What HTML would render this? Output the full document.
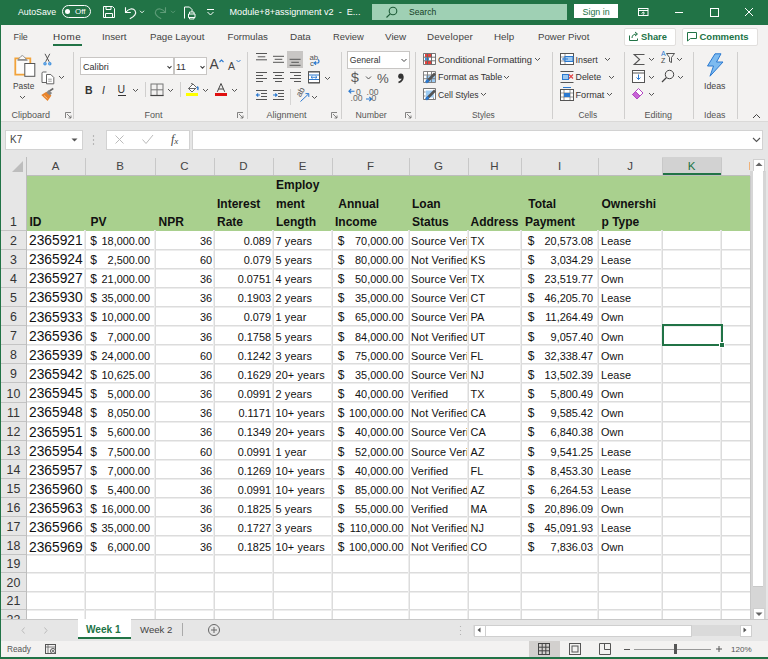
<!DOCTYPE html>
<html><head><meta charset="utf-8">
<style>
*{margin:0;padding:0;box-sizing:content-box}
html,body{width:768px;height:659px;overflow:hidden;background:#F3F2F1;font-family:"Liberation Sans",sans-serif;position:relative}
.abs{position:absolute}
.hl{position:absolute;left:27px;width:723px;height:1px;background:#DCDCDC;box-shadow:0 1px 0 #EDEDED}
.vl{position:absolute;top:230px;height:389px;width:1px;background:#DCDCDC;box-shadow:-1px 0 0 #EDEDED}
.colh{top:157px;height:18px;line-height:18px;text-align:center;font-size:11.5px}
.rowh{left:1px;width:25px;text-align:center;font-size:12.4px;color:#333;line-height:14px}
.h{font-weight:bold;font-size:12px;color:#111;line-height:14px;white-space:nowrap}
.d{font-size:10.9px;color:#111;line-height:14px;white-space:nowrap}
.big{font-size:13.8px;color:#111;line-height:14px;white-space:nowrap}
.clip{overflow:hidden}
.t{letter-spacing:0.12px}
.dl{font-size:12px}
.tab{position:absolute;top:31px;font-size:9.7px;color:#444;line-height:12px;white-space:nowrap}
.ui{position:absolute;font-size:9.5px;color:#333;line-height:12px;white-space:nowrap}
.lbl{position:absolute;top:109px;font-size:9px;color:#555;line-height:12px;white-space:nowrap}
.sep{position:absolute;top:52px;width:1px;height:67px;background:#D0CFCE}
</style></head><body>
<!-- window borders -->
<div class="abs" style="left:0;top:0;width:768px;height:25px;background:#217346"></div>
<div class="abs" style="left:0;top:0;width:1px;height:659px;background:#217346"></div>
<div class="abs" style="left:0;top:657px;width:768px;height:2px;background:#217346"></div>

<!-- title bar -->
<div class="ui" style="left:18px;top:6px;font-size:8.8px;color:#fff">AutoSave</div>
<div class="abs" style="left:62px;top:5px;width:27px;height:11px;border:1px solid #fff;border-radius:7px"></div>
<div class="abs" style="left:65px;top:9px;width:5px;height:5px;background:#fff;border-radius:50%"></div>
<div class="ui" style="left:75px;top:6px;font-size:8px;color:#fff">Off</div>
<!-- save icon -->
<svg class="abs" style="left:102px;top:5px" width="14" height="14" viewBox="0 0 14 14"><path d="M1.5 1.5h9l2 2v9h-11z" fill="none" stroke="#fff" stroke-width="1"/><path d="M4 1.5v3h5v-3M3.5 12.5v-4h7v4" fill="none" stroke="#fff" stroke-width="1"/></svg>
<!-- undo -->
<svg class="abs" style="left:95px;top:0" width="130" height="25" viewBox="95 0 130 25">
 <path d="M125.5 7.2v5.3h5.3" fill="none" stroke="#fff" stroke-width="1.1"/>
 <path d="M125.8 12.2C128.5 8.5 133 7.8 135 10.5C137 13.5 134.5 16.5 129.8 18.8" fill="none" stroke="#fff" stroke-width="1.1"/>
 <path d="M140 10.8l2 2 2-2" fill="none" stroke="#fff" stroke-width="0.9"/>
 <path d="M165.5 7.2v5.3h-5.3" fill="none" stroke="#5E9C78" stroke-width="1.1"/>
 <path d="M165.2 12.2C162.5 8.5 158 7.8 156 10.5C154 13.5 156.5 16.5 161.2 18.8" fill="none" stroke="#5E9C78" stroke-width="1.1"/>
 <path d="M171 10.8l2 2 2-2" fill="none" stroke="#5E9C78" stroke-width="0.9"/>
 <path d="M184.5 18.5v-11.5h5l2.5 2.5v2.5" fill="none" stroke="#fff" stroke-width="1"/>
 <path d="M188.5 14h6.5v3.5h-6.5z" fill="none" stroke="#fff" stroke-width="1"/>
 <path d="M189.5 14v-2h4.5v2M189.5 17.5v1.5h4.5v-1.5" fill="none" stroke="#fff" stroke-width="0.9"/>
</svg>
<!-- customize -->
<svg class="abs" style="left:206px;top:8px" width="9" height="9" viewBox="0 0 9 9"><path d="M1 1.5h7M1.5 4l3 3 3-3" fill="none" stroke="#fff" stroke-width="1"/></svg>
<div class="ui" style="left:229.5px;top:5.5px;font-size:9.1px;color:#fff">Module+8+assignment v2&nbsp; - &nbsp;E...</div>
<!-- search -->
<div class="abs" style="left:372px;top:4px;width:195px;height:16px;background:#9FD0B4"></div>
<svg class="abs" style="left:385px;top:5px" width="14" height="14" viewBox="0 0 14 14"><circle cx="8" cy="6" r="3.8" fill="none" stroke="#1E5C38" stroke-width="1.1"/><path d="M5.2 8.8L1.5 12.5" stroke="#1E5C38" stroke-width="1.2"/></svg>
<div class="ui" style="left:409px;top:6px;font-size:8.6px;color:#133F25">Search</div>
<!-- sign in -->
<div class="abs" style="left:574px;top:4px;width:44px;height:14px;background:#fff"></div>
<div class="ui" style="left:582.5px;top:5.5px;font-size:8.9px;color:#217346">Sign in</div>
<!-- window controls -->
<svg class="abs" style="left:637px;top:7px" width="12" height="10" viewBox="0 0 12 10"><rect x="1.5" y="1.5" width="9.5" height="7" fill="none" stroke="#fff"/><path d="M1.5 3.5h9.5" stroke="#fff"/><path d="M4.5 6.5l1.75-1.5 1.75 1.5M6.25 5v3" fill="none" stroke="#fff" stroke-width="0.8"/></svg>
<div class="abs" style="left:674.5px;top:11.5px;width:8px;height:1px;background:#fff"></div>
<div class="abs" style="left:709.5px;top:7.5px;width:7.5px;height:7.5px;border:1px solid #fff"></div>
<svg class="abs" style="left:744px;top:6.5px" width="10" height="10" viewBox="0 0 10 10"><path d="M1 1L9 9M9 1L1 9" stroke="#fff" stroke-width="1"/></svg>

<!-- ribbon tabs -->
<div class="tab" style="left:13.5px;font-size:8.9px">File</div>
<div class="tab" style="left:53px;color:#333;font-size:9.9px;letter-spacing:0.45px">Home</div>
<div class="abs" style="left:53px;top:44px;width:29px;height:2px;background:#217346"></div>
<div class="tab" style="left:102px;font-size:9.8px">Insert</div>
<div class="tab" style="left:150px">Page Layout</div>
<div class="tab" style="left:227.5px">Formulas</div>
<div class="tab" style="left:290px;font-size:9.9px">Data</div>
<div class="tab" style="left:333px;font-size:9.4px">Review</div>
<div class="tab" style="left:385px;font-size:9.9px">View</div>
<div class="tab" style="left:427px;font-size:9.8px;letter-spacing:0.15px">Developer</div>
<div class="tab" style="left:494px;font-size:9.8px">Help</div>
<div class="tab" style="left:538px;font-size:9.65px">Power Pivot</div>
<div class="abs" style="left:623.5px;top:28px;width:50px;height:16px;background:#fff;border:1px solid #E1DFDD;border-radius:2px"></div>
<svg class="abs" style="left:628px;top:31px" width="12" height="11" viewBox="0 0 12 11"><path d="M1.5 4.5v5h8v-2" fill="none" stroke="#217346"/><path d="M4 7c0-3 2-4 5-4M7 1l2.5 2L7 5" fill="none" stroke="#217346"/></svg>
<div class="tab" style="left:641px;top:31px;color:#217346;font-size:9.3px;font-weight:bold">Share</div>
<div class="abs" style="left:681.5px;top:28px;width:74px;height:16px;background:#fff;border:1px solid #E1DFDD;border-radius:2px"></div>
<svg class="abs" style="left:686px;top:31px" width="12" height="11" viewBox="0 0 12 11"><path d="M1.5 1.5h9v6h-6l-3 2.5z" fill="none" stroke="#217346"/></svg>
<div class="tab" style="left:699.5px;top:31px;color:#217346;font-size:9.5px;font-weight:bold">Comments</div>

<!-- ===== ribbon body ===== -->
<!-- Clipboard -->
<svg class="abs" style="left:0;top:45px" width="75" height="60" viewBox="0 45 75 60">
 <path d="M15.3 58.3h15v16.4h-15z" fill="#FAFAFA" stroke="#F2A33A" stroke-width="1.8"/>
 <path d="M17.5 60.2h10" stroke="#999" stroke-width="1.4"/>
 <path d="M18 59.5l3-3.2q1.3-1.5 2.6 0l3 3.2z" fill="#FAFAFA" stroke="#888" stroke-width="0.9"/>
 <rect x="24.8" y="63.5" width="10" height="12.8" fill="#fff" stroke="#555" stroke-width="1"/>
 <path d="M45 53.8l4.2 8M49.8 53.8l-4.2 8" stroke="#444" stroke-width="0.9"/>
 <circle cx="45" cy="63.8" r="1.7" fill="#3B8EDC"/><circle cx="49.8" cy="63.8" r="1.7" fill="#3B8EDC"/>
 <circle cx="45" cy="63.8" r="0.6" fill="#BFDDF7"/><circle cx="49.8" cy="63.8" r="0.6" fill="#BFDDF7"/>
 <path d="M46.5 82.5h-4.5v-9.3q0-1.2 1.2-1.2h3.3" fill="#fff" stroke="#555" stroke-width="0.9"/>
 <path d="M46.5 74.5h4.3l3 3v6.3h-7.3z" fill="#fff" stroke="#555" stroke-width="0.9"/>
 <path d="M48.2 79.2h3.6M48.2 81.2h3.6" stroke="#777" stroke-width="0.7"/>
 <path d="M41.3 95l6.3 5.9 3.8-5.4-5-3.8z" fill="#E8832A"/>
 <path d="M44 95.5l3.5 3" stroke="#F5C08A" stroke-width="1"/>
 <path d="M46.3 92.5l2.2-2.4 3.6 3-2.2 2.4z" fill="#888"/>
 <path d="M49.5 91l3.8-2.5" stroke="#666" stroke-width="1.5"/>
</svg>
<div class="ui" style="left:12.8px;top:79.5px;font-size:9.7px;color:#444;transform:scaleX(0.86);transform-origin:0 0">Paste</div>
<svg class="abs" style="left:19px;top:95px" width="7" height="5" viewBox="0 0 7 5"><path d="M1 1l2.5 2.5L6 1" fill="none" stroke="#555"/></svg>
<svg class="abs" style="left:58px;top:75px" width="7" height="5" viewBox="0 0 7 5"><path d="M1 1l2.5 2.5L6 1" fill="none" stroke="#555"/></svg>
<div class="lbl" style="left:11.5px">Clipboard</div>
<svg class="abs" style="left:65px;top:112px" width="7" height="7" viewBox="0 0 7 7"><path d="M0.5 6V0.5H6M2 2l4 4M6 3.5V6H3.5" fill="none" stroke="#666" stroke-width="0.8"/></svg>
<div class="sep" style="left:73px"></div>

<!-- Font -->
<div class="abs" style="left:80px;top:57px;width:92px;height:16px;background:#fff;border:1px solid #C8C6C4"></div>
<div class="ui" style="left:83px;top:60.5px;font-size:9.1px;color:#333">Calibri</div>
<svg class="abs" style="left:166px;top:64.5px" width="7" height="5" viewBox="0 0 7 5"><path d="M1.5 1.2l2 2 2-2" fill="none" stroke="#444" stroke-width="1.1"/></svg>
<div class="abs" style="left:174px;top:57px;width:31px;height:16px;background:#fff;border:1px solid #C8C6C4"></div>
<div class="ui" style="left:176px;top:60.5px;font-size:9.5px;color:#333">11</div>
<svg class="abs" style="left:198.5px;top:64.5px" width="7" height="5" viewBox="0 0 7 5"><path d="M1.5 1.2l2 2 2-2" fill="none" stroke="#444" stroke-width="1.1"/></svg>
<div class="ui" style="left:209.5px;top:58.5px;font-size:13.8px;color:#444">A</div>
<svg class="abs" style="left:218.5px;top:59px" width="5" height="4" viewBox="0 0 5 4"><path d="M0.5 3L2.5 1 4.5 3" fill="none" stroke="#2B79D0" stroke-width="1.1"/></svg>
<div class="ui" style="left:228px;top:60px;font-size:10.5px;color:#444">A</div>
<svg class="abs" style="left:236px;top:59px" width="5" height="4" viewBox="0 0 5 4"><path d="M0.5 1L2.5 3 4.5 1" fill="none" stroke="#2B79D0" stroke-width="0.9"/></svg>
<div class="ui" style="left:85px;top:83.5px;font-size:10.5px;font-weight:bold;color:#333">B</div>
<div class="ui" style="left:102px;top:83.5px;font-size:10.5px;font-style:italic;color:#333">I</div>
<div class="ui" style="left:117.5px;top:83px;font-size:10.5px;color:#333">U</div>
<div class="abs" style="left:117.5px;top:95px;width:8px;height:1px;background:#333"></div>
<svg class="abs" style="left:132px;top:88px" width="7" height="5" viewBox="0 0 7 5"><path d="M1 1l2.5 2.5L6 1" fill="none" stroke="#555"/></svg>
<div class="abs" style="left:145px;top:82px;width:1px;height:15px;background:#D0CFCE"></div>
<svg class="abs" style="left:150px;top:83px" width="14" height="14" viewBox="0 0 14 14"><rect x="1" y="1" width="12" height="11.5" fill="none" stroke="#777" stroke-width="1"/><path d="M7 1v11.5M1 6.8h12" stroke="#777" stroke-width="1"/><path d="M0.5 12.5h13" stroke="#444" stroke-width="1.2"/></svg>
<svg class="abs" style="left:167px;top:88px" width="7" height="5" viewBox="0 0 7 5"><path d="M1 1l2.5 2.5L6 1" fill="none" stroke="#555"/></svg>
<div class="abs" style="left:180px;top:82px;width:1px;height:15px;background:#D0CFCE"></div>
<svg class="abs" style="left:186px;top:82px" width="14" height="11" viewBox="0 0 14 11"><path d="M2.5 6.5l4.5-4.5 3.5 3.5-4.5 4.5z" fill="#fff" stroke="#555" stroke-width="0.9"/><path d="M5 1.5l2 0.5M2.5 6.5h7" fill="none" stroke="#555" stroke-width="0.9"/><path d="M11.3 4.5q1.5 1.8 0.3 3.5" fill="none" stroke="#2B79D0" stroke-width="1.6"/></svg>
<div class="abs" style="left:186px;top:93px;width:12px;height:3px;background:#FFFF00"></div>
<svg class="abs" style="left:202px;top:88px" width="7" height="5" viewBox="0 0 7 5"><path d="M1 1l2.5 2.5L6 1" fill="none" stroke="#555"/></svg>
<svg class="abs" style="left:214px;top:82px" width="14" height="11" viewBox="0 0 14 11"><path d="M3.3 9.8L7 1.5l3.7 8.3M4.6 7h4.8" fill="none" stroke="#444" stroke-width="1"/></svg>
<div class="abs" style="left:215px;top:93px;width:12px;height:3px;background:#E01010"></div>
<svg class="abs" style="left:231px;top:88px" width="7" height="5" viewBox="0 0 7 5"><path d="M1 1l2.5 2.5L6 1" fill="none" stroke="#555"/></svg>
<div class="lbl" style="left:144.5px">Font</div>
<svg class="abs" style="left:237px;top:112px" width="7" height="7" viewBox="0 0 7 7"><path d="M0.5 6V0.5H6M2 2l4 4M6 3.5V6H3.5" fill="none" stroke="#666" stroke-width="0.8"/></svg>
<div class="sep" style="left:246.5px"></div>

<!-- Alignment -->
<div class="abs" style="left:287px;top:51px;width:16px;height:17px;background:#C8C6C4"></div>
<svg class="abs" style="left:250px;top:48px" width="90" height="57" viewBox="250 48 90 57">
 <g stroke="#555" stroke-width="1">
 <path d="M256 53.5h11M257.7 56.8h7.6M256 59.8h11"/>
 <path d="M273 56.3h11M274.7 59.3h7.6M273 62.3h11"/>
 <path d="M289.6 59.3h11M291.3 62.3h7.6M289.6 65.3h11"/>
 <path d="M256 72.5h11M256 75.5h7M256 78.5h11M256 81.5h7"/>
 <path d="M273 72.5h11M275 75.5h7M273 78.5h11M275 81.5h7"/>
 <path d="M290 72.5h11M294 75.5h7M290 78.5h11M294 81.5h7"/>
 <path d="M256 90.5h11M261 93.5h6M261 96.5h6M256 99.5h11"/>
 <path d="M273 90.5h11M278 93.5h6M278 96.5h6M273 99.5h11"/>
 </g>
 <path d="M260 95h-3.5M258.2 93.5L256.5 95l1.7 1.5" fill="none" stroke="#2B79D0" stroke-width="1.1"/>
 <path d="M273 95h3.8M275.3 93.5l1.7 1.5-1.7 1.5" fill="none" stroke="#2B79D0" stroke-width="1.1"/>
 <path d="M290.5 89v16" stroke="#D6D5D4"/>
 <text x="309.5" y="59.5" font-size="7.8" fill="#555" font-family="Liberation Sans">ab</text>
 <text x="310" y="65.5" font-size="7.8" fill="#555" font-family="Liberation Sans">c</text>
 <path d="M318 59.5q2 1.5 0 3.5h-3M316 61.5l-1.8 1.6 1.8 1.6" fill="none" stroke="#2B79D0" stroke-width="1.2"/>
 <rect x="308.5" y="71.8" width="11" height="11" fill="#fff" stroke="#444" stroke-width="1"/>
 <path d="M308.5 75h11M308.5 79.5h11" stroke="#2B79D0" stroke-width="1"/>
 <path d="M311 77.3h6M312.5 76l-1.5 1.3 1.5 1.3M315.5 76l1.5 1.3-1.5 1.3" fill="none" stroke="#2B79D0" stroke-width="0.9"/>
 <path d="M308.5 71.8h11v11h-11z" fill="none" stroke="#555" stroke-width="1"/>
 <path d="M325 77l2.5 2.5 2.5-2.5" fill="none" stroke="#555"/>
 <text x="0" y="0" font-size="8.5" fill="#555" font-family="Liberation Sans" transform="translate(300.5 97.5) rotate(-60)">ab</text>
 <path d="M300.5 101.5l8-7.5M305.5 93.6h3.3v3.3" fill="none" stroke="#2B79D0" stroke-width="1"/>
 <path d="M312 96l2.5 2.5 2.5-2.5" fill="none" stroke="#555"/>
</svg>
<div class="lbl" style="left:266.5px">Alignment</div>
<svg class="abs" style="left:331px;top:112px" width="7" height="7" viewBox="0 0 7 7"><path d="M0.5 6V0.5H6M2 2l4 4M6 3.5V6H3.5" fill="none" stroke="#666" stroke-width="0.8"/></svg>
<div class="sep" style="left:340.5px"></div>

<!-- Number -->
<div class="abs" style="left:347px;top:51px;width:60.5px;height:16px;background:#fff;border:1px solid #C8C6C4"></div>
<div class="ui" style="left:349.8px;top:54px;font-size:8.6px;color:#333">General</div>
<svg class="abs" style="left:340px;top:45px" width="80" height="60" viewBox="340 45 80 60">
 <path d="M401.5 59l2.5 2.5 2.5-2.5" fill="none" stroke="#444" stroke-width="1"/>
 <text x="350.5" y="82" font-size="13" fill="#555" font-family="Liberation Sans">S</text>
 <path d="M355 71.5v12.5" stroke="#555" stroke-width="0.9"/>
 <path d="M366 76.5l2.5 2.5 2.5-2.5" fill="none" stroke="#555" stroke-width="1"/>
 <text x="377" y="82.5" font-size="13.2" fill="#555" font-family="Liberation Sans">%</text>
 <circle cx="400.8" cy="76.2" r="2.6" fill="#333"/>
 <path d="M402.8 76.5q0.5 4.2-4.3 6" fill="none" stroke="#333" stroke-width="1.6"/>
 <path d="M354.5 91.2h-5.5M351.2 89l-2.3 2.2 2.3 2.2" fill="none" stroke="#2B79D0" stroke-width="1.1"/>
 <text x="356" y="94.5" font-size="8.6" fill="#666" font-family="Liberation Sans">0</text>
 <text x="350.5" y="101.3" font-size="8.6" fill="#666" font-family="Liberation Sans">.00</text>
 <text x="366.5" y="94.5" font-size="8.6" fill="#666" font-family="Liberation Sans">.00</text>
 <path d="M366 99h5.5M369.3 96.8l2.3 2.2-2.3 2.2" fill="none" stroke="#2B79D0" stroke-width="1.1"/>
 <text x="371.5" y="101.3" font-size="8.6" fill="#666" font-family="Liberation Sans">0</text>
</svg>
<div class="lbl" style="left:355.5px;font-size:8.8px">Number</div>
<svg class="abs" style="left:405px;top:112px" width="7" height="7" viewBox="0 0 7 7"><path d="M0.5 6V0.5H6M2 2l4 4M6 3.5V6H3.5" fill="none" stroke="#666" stroke-width="0.8"/></svg>
<div class="sep" style="left:414.5px"></div>

<!-- Styles -->
<svg class="abs" style="left:418px;top:48px" width="20" height="56" viewBox="418 48 20 56">
 <rect x="423.5" y="53.5" width="12" height="11" fill="#fff"/><rect x="423.5" y="71.5" width="12" height="11" fill="#fff"/><rect x="423.5" y="88.5" width="12" height="11" fill="#fff"/>
 <rect x="425" y="54" width="7" height="3" fill="#E8413B"/><rect x="425" y="61" width="7" height="3" fill="#E8413B"/>
 <rect x="425" y="57.5" width="4" height="3" fill="#3B8EDC"/>
 <path d="M423.5 53.5h12v11h-12z M423.5 57.2h12M423.5 60.8h12M427.5 53.5v11M431.5 53.5v11" fill="none" stroke="#666" stroke-width="0.9"/>
 <path d="M426 75.5h9.5v7h-9.5z" fill="#9CCBF2"/>
 <path d="M423.5 71.5h12v11h-12z M423.5 75h12M423.5 78.7h12M427.5 71.5v11M431.5 71.5v11" fill="none" stroke="#777" stroke-width="0.9"/>
 <path d="M426.5 82L435 73.5" stroke="#555" stroke-width="2.6"/>
 <path d="M426 82.5l2.5-2.5" stroke="#2B79D0" stroke-width="2.6"/>
 <path d="M425.8 90.5h8v7h-8z" fill="#9CCBF2"/>
 <path d="M423.5 88.5h12v11h-12z" fill="none" stroke="#666" stroke-width="0.9"/>
 <path d="M423.5 92h2M423.5 96h2M433.5 99.5v-2" stroke="#777" stroke-width="0.8"/>
 <path d="M426.5 99L435 90.5" stroke="#555" stroke-width="2.6"/>
 <path d="M426 99.5l2.5-2.5" stroke="#2B79D0" stroke-width="2.6"/>
</svg>
<div class="ui" style="left:438px;top:53.5px;font-size:9.36px;color:#333">Conditional Formatting</div>
<svg class="abs" style="left:534px;top:57px" width="7" height="5" viewBox="0 0 7 5"><path d="M1 1l2.5 2.5L6 1" fill="none" stroke="#555"/></svg>

<div class="ui" style="left:438px;top:71px;font-size:9px;color:#333">Format as Table</div>
<svg class="abs" style="left:503px;top:74.5px" width="7" height="5" viewBox="0 0 7 5"><path d="M1 1l2.5 2.5L6 1" fill="none" stroke="#555"/></svg>

<div class="ui" style="left:438px;top:88.5px;font-size:8.6px;color:#333">Cell Styles</div>
<svg class="abs" style="left:480px;top:92px" width="7" height="5" viewBox="0 0 7 5"><path d="M1 1l2.5 2.5L6 1" fill="none" stroke="#555"/></svg>
<div class="lbl" style="left:472px;font-size:8.4px">Styles</div>
<div class="sep" style="left:552px"></div>

<!-- Cells -->
<svg class="abs" style="left:560px;top:53px" width="14" height="12" viewBox="0 0 14 12"><rect x="0.5" y="0.5" width="13" height="11" fill="#fff" stroke="#555"/><path d="M0.5 4h13M0.5 8h13M5 0.5v11" stroke="#555" stroke-width="0.6"/><rect x="5" y="3.5" width="8" height="5" fill="#9CC8F0" stroke="#2B79D0"/><path d="M8 6h-5M4 4.5L2.5 6 4 7.5" fill="none" stroke="#2B79D0"/></svg>
<div class="ui" style="left:575.5px;top:53.5px;font-size:8.9px;color:#333">Insert</div>
<svg class="abs" style="left:604px;top:57px" width="7" height="5" viewBox="0 0 7 5"><path d="M1 1l2.5 2.5L6 1" fill="none" stroke="#555"/></svg>
<svg class="abs" style="left:560px;top:71px" width="14" height="12" viewBox="0 0 14 12"><path d="M0.5 0.5h13M0.5 11.5h13" stroke="#555"/><rect x="2.5" y="3.5" width="6" height="5" fill="#9CC8F0" stroke="#2B79D0"/><path d="M9 3.5l4 4M13 3.5l-4 4" stroke="#E04040" stroke-width="1.1"/></svg>
<div class="ui" style="left:575.5px;top:71px;font-size:8.85px;color:#333">Delete</div>
<svg class="abs" style="left:608px;top:74.5px" width="7" height="5" viewBox="0 0 7 5"><path d="M1 1l2.5 2.5L6 1" fill="none" stroke="#555"/></svg>
<svg class="abs" style="left:560px;top:87px" width="14" height="14" viewBox="0 0 14 14"><rect x="0.5" y="2.5" width="13" height="11" fill="#fff" stroke="#555"/><path d="M0.5 6h13M0.5 10h13M4 2.5v11M10 2.5v11" stroke="#555" stroke-width="0.6"/><rect x="4" y="6" width="6" height="4" fill="#2B79D0"/><path d="M3 0.5h8" stroke="#2B79D0"/></svg>
<div class="ui" style="left:575.5px;top:89px;font-size:9.15px;color:#333">Format</div>
<svg class="abs" style="left:606px;top:92px" width="7" height="5" viewBox="0 0 7 5"><path d="M1 1l2.5 2.5L6 1" fill="none" stroke="#555"/></svg>
<div class="lbl" style="left:578.5px;font-size:8.4px">Cells</div>
<div class="sep" style="left:623.5px"></div>

<!-- Editing -->
<svg class="abs" style="left:632px;top:52px" width="14" height="14" viewBox="0 0 14 14"><path d="M12.5 2.5H2.2L7.6 7.5 2.2 12.5H12.5" fill="none" stroke="#555" stroke-width="1.1"/></svg>
<svg class="abs" style="left:648px;top:57px" width="7" height="5" viewBox="0 0 7 5"><path d="M1 1l2.5 2.5L6 1" fill="none" stroke="#555"/></svg>
<div class="ui" style="left:661px;top:50px;font-size:7px;color:#2B79D0;line-height:7px">A</div>
<div class="ui" style="left:661px;top:57px;font-size:7px;color:#444;line-height:7px">Z</div>
<svg class="abs" style="left:666px;top:53px" width="9" height="10" viewBox="0 0 9 10"><path d="M0.5 0.5h8l-3 4v5l-2-1v-4z" fill="none" stroke="#444" stroke-width="0.9"/></svg>
<svg class="abs" style="left:676px;top:57px" width="7" height="5" viewBox="0 0 7 5"><path d="M1 1l2.5 2.5L6 1" fill="none" stroke="#555"/></svg>
<svg class="abs" style="left:632px;top:70px" width="13" height="13" viewBox="0 0 13 13"><rect x="0.5" y="0.5" width="12" height="12" fill="#fff" stroke="#555"/><path d="M0.5 3h12" stroke="#555"/><path d="M6.5 4.5v5M4.5 7.5l2 2 2-2" fill="none" stroke="#2B79D0"/></svg>
<svg class="abs" style="left:648px;top:75px" width="7" height="5" viewBox="0 0 7 5"><path d="M1 1l2.5 2.5L6 1" fill="none" stroke="#555"/></svg>
<svg class="abs" style="left:661px;top:69px" width="14" height="14" viewBox="0 0 14 14"><circle cx="8.5" cy="5.5" r="4.2" fill="none" stroke="#444" stroke-width="1"/><path d="M5.5 8.5L1 13" stroke="#444" stroke-width="1.2"/></svg>
<svg class="abs" style="left:677px;top:75px" width="7" height="5" viewBox="0 0 7 5"><path d="M1 1l2.5 2.5L6 1" fill="none" stroke="#555"/></svg>
<svg class="abs" style="left:631px;top:87px" width="14" height="13" viewBox="0 0 14 13"><path d="M1.5 7.5l6-6 4.5 4.5-6 6z" fill="#fff" stroke="#B347C2" stroke-width="1"/><path d="M1.5 7.5l3-3 4.5 4.5-3 3z" fill="#C766D6" stroke="#B347C2" stroke-width="1"/></svg>
<svg class="abs" style="left:648px;top:92px" width="7" height="5" viewBox="0 0 7 5"><path d="M1 1l2.5 2.5L6 1" fill="none" stroke="#555"/></svg>
<div class="lbl" style="left:644.5px">Editing</div>
<div class="sep" style="left:692.5px"></div>

<!-- Ideas -->
<svg class="abs" style="left:706px;top:53px" width="19" height="24" viewBox="0 0 19 24"><path d="M9 0.8L1.5 13h6l-3.5 10.2L17 9h-6.5L15 0.8z" fill="#7DBBF0" stroke="#2B79D0" stroke-width="1"/></svg>
<div class="ui" style="left:704px;top:80px;font-size:8.8px;color:#444">Ideas</div>
<div class="lbl" style="left:704px;font-size:8.8px">Ideas</div>
<div class="sep" style="left:737px"></div>
<svg class="abs" style="left:752px;top:113px" width="9" height="6" viewBox="0 0 9 6"><path d="M1 5l3.5-3.5L8 5" fill="none" stroke="#444"/></svg>

<!-- ribbon bottom / formula area -->
<div class="abs" style="left:1px;top:121.5px;width:767px;height:36px;background:#E6E6E6"></div>
<div class="abs" style="left:1px;top:121px;width:767px;height:1px;background:#DAD9D8"></div>
<div class="abs" style="left:5px;top:130px;width:76px;height:18px;background:#fff;border:1px solid #D2D2D2"></div>
<div class="ui" style="left:10px;top:134px;font-size:10px;color:#444">K7</div>
<svg class="abs" style="left:71px;top:138px" width="7" height="4" viewBox="0 0 7 4"><path d="M0.5 0.5h6L3.5 3.5z" fill="#555"/></svg>
<svg class="abs" style="left:92px;top:134px" width="3" height="12" viewBox="0 0 3 12"><circle cx="1.5" cy="2" r="0.7" fill="#999"/><circle cx="1.5" cy="6" r="0.7" fill="#999"/><circle cx="1.5" cy="10" r="0.7" fill="#999"/></svg>
<div class="abs" style="left:105.5px;top:130px;width:82px;height:18px;background:#fff;border:1px solid #D2D2D2"></div>
<svg class="abs" style="left:114px;top:134px" width="11" height="11" viewBox="0 0 11 11"><path d="M1.5 1.5l8 8M9.5 1.5l-8 8" stroke="#BBB" stroke-width="1"/></svg>
<svg class="abs" style="left:141px;top:134px" width="13" height="11" viewBox="0 0 13 11"><path d="M1.5 5.5l3.5 4 7-8.5" fill="none" stroke="#BBB" stroke-width="1"/></svg>
<div class="ui" style="left:171px;top:132.5px;font-size:12px;font-style:italic;color:#444;font-family:'Liberation Serif',serif">f<span style="font-size:9px;position:relative;top:1px">x</span></div>
<div class="abs" style="left:192px;top:130px;width:569px;height:18px;background:#fff;border:1px solid #D2D2D2"></div>
<svg class="abs" style="left:752px;top:137px" width="9" height="6" viewBox="0 0 9 6"><path d="M1 1l3.5 3.5L8 1" fill="none" stroke="#555" stroke-width="1.1"/></svg>

<!-- ===== grid ===== -->
<div class="abs" style="left:27px;top:176px;width:723px;height:443px;background:#fff"></div>
<div class="abs" style="left:27px;top:176px;width:723px;height:54.5px;background:#A9D08E"></div>
<div class="hl" style="top:249px"></div>
<div class="hl" style="top:268px"></div>
<div class="hl" style="top:287px"></div>
<div class="hl" style="top:306px"></div>
<div class="hl" style="top:325px"></div>
<div class="hl" style="top:344px"></div>
<div class="hl" style="top:363px"></div>
<div class="hl" style="top:382px"></div>
<div class="hl" style="top:401px"></div>
<div class="hl" style="top:421px"></div>
<div class="hl" style="top:440px"></div>
<div class="hl" style="top:459px"></div>
<div class="hl" style="top:478px"></div>
<div class="hl" style="top:497px"></div>
<div class="hl" style="top:516px"></div>
<div class="hl" style="top:535px"></div>
<div class="hl" style="top:554px"></div>
<div class="hl" style="top:572px"></div>
<div class="hl" style="top:591px"></div>
<div class="hl" style="top:609px"></div>
<div class="vl" style="left:85px"></div>
<div class="vl" style="left:155px"></div>
<div class="vl" style="left:214px"></div>
<div class="vl" style="left:273px"></div>
<div class="vl" style="left:332px"></div>
<div class="vl" style="left:409px"></div>
<div class="vl" style="left:468px"></div>
<div class="vl" style="left:521px"></div>
<div class="vl" style="left:598px"></div>
<div class="vl" style="left:662px"></div>
<div class="vl" style="left:721px"></div>
<div class="abs" style="left:1px;top:157px;width:749px;height:19px;background:#E6E6E6"></div>
<div class="abs" style="left:1px;top:175px;width:749px;height:1px;background:#BDBDBD"></div>
<div class="abs" style="left:1px;top:157px;width:25px;height:462px;background:#E6E6E6"></div>
<div class="abs" style="left:26px;top:157px;width:1px;height:462px;background:#BDBDBD"></div>
<svg class="abs" style="left:11px;top:160px" width="14" height="14"><path d="M12 1 L12 12 L1 12 Z" fill="#BDBDBD"/></svg>
<div class="abs" style="left:662px;top:157px;width:60px;height:18px;background:#D2D2D2"></div>
<div class="abs" style="left:662px;top:173px;width:60px;height:2px;background:#217346"></div>
<div class="abs" style="left:85px;top:158px;width:1px;height:17px;background:#C8C8C8"></div>
<div class="abs colh" style="left:26px;width:59px;color:#444">A</div>
<div class="abs" style="left:155px;top:158px;width:1px;height:17px;background:#C8C8C8"></div>
<div class="abs colh" style="left:85px;width:70px;color:#444">B</div>
<div class="abs" style="left:214px;top:158px;width:1px;height:17px;background:#C8C8C8"></div>
<div class="abs colh" style="left:155px;width:59px;color:#444">C</div>
<div class="abs" style="left:273px;top:158px;width:1px;height:17px;background:#C8C8C8"></div>
<div class="abs colh" style="left:214px;width:59px;color:#444">D</div>
<div class="abs" style="left:332px;top:158px;width:1px;height:17px;background:#C8C8C8"></div>
<div class="abs colh" style="left:273px;width:59px;color:#444">E</div>
<div class="abs" style="left:409px;top:158px;width:1px;height:17px;background:#C8C8C8"></div>
<div class="abs colh" style="left:332px;width:77px;color:#444">F</div>
<div class="abs" style="left:468px;top:158px;width:1px;height:17px;background:#C8C8C8"></div>
<div class="abs colh" style="left:409px;width:59px;color:#444">G</div>
<div class="abs" style="left:521px;top:158px;width:1px;height:17px;background:#C8C8C8"></div>
<div class="abs colh" style="left:468px;width:53px;color:#444">H</div>
<div class="abs" style="left:598px;top:158px;width:1px;height:17px;background:#C8C8C8"></div>
<div class="abs colh" style="left:521px;width:77px;color:#444">I</div>
<div class="abs" style="left:662px;top:158px;width:1px;height:17px;background:#C8C8C8"></div>
<div class="abs colh" style="left:598px;width:64px;color:#444">J</div>
<div class="abs" style="left:721px;top:158px;width:1px;height:17px;background:#C8C8C8"></div>
<div class="abs colh" style="left:662px;width:59px;color:#217346">K</div>
<div class="abs rowh" style="top:215.0px">1</div>
<div class="abs" style="left:1px;top:230.0px;width:25px;height:1px;background:#C4C4C4"></div>
<div class="abs rowh" style="top:234.1px">2</div>
<div class="abs" style="left:1px;top:249.1px;width:25px;height:1px;background:#C4C4C4"></div>
<div class="abs rowh" style="top:253.1px">3</div>
<div class="abs" style="left:1px;top:268.1px;width:25px;height:1px;background:#C4C4C4"></div>
<div class="abs rowh" style="top:272.1px">4</div>
<div class="abs" style="left:1px;top:287.1px;width:25px;height:1px;background:#C4C4C4"></div>
<div class="abs rowh" style="top:291.2px">5</div>
<div class="abs" style="left:1px;top:306.2px;width:25px;height:1px;background:#C4C4C4"></div>
<div class="abs rowh" style="top:310.2px">6</div>
<div class="abs" style="left:1px;top:325.2px;width:25px;height:1px;background:#C4C4C4"></div>
<div class="abs rowh" style="top:329.3px">7</div>
<div class="abs" style="left:1px;top:344.3px;width:25px;height:1px;background:#C4C4C4"></div>
<div class="abs rowh" style="top:348.4px">8</div>
<div class="abs" style="left:1px;top:363.4px;width:25px;height:1px;background:#C4C4C4"></div>
<div class="abs rowh" style="top:367.4px">9</div>
<div class="abs" style="left:1px;top:382.4px;width:25px;height:1px;background:#C4C4C4"></div>
<div class="abs rowh" style="top:386.5px">10</div>
<div class="abs" style="left:1px;top:401.5px;width:25px;height:1px;background:#C4C4C4"></div>
<div class="abs rowh" style="top:405.5px">11</div>
<div class="abs" style="left:1px;top:420.5px;width:25px;height:1px;background:#C4C4C4"></div>
<div class="abs rowh" style="top:424.6px">12</div>
<div class="abs" style="left:1px;top:439.6px;width:25px;height:1px;background:#C4C4C4"></div>
<div class="abs rowh" style="top:443.6px">13</div>
<div class="abs" style="left:1px;top:458.6px;width:25px;height:1px;background:#C4C4C4"></div>
<div class="abs rowh" style="top:462.6px">14</div>
<div class="abs" style="left:1px;top:477.6px;width:25px;height:1px;background:#C4C4C4"></div>
<div class="abs rowh" style="top:481.7px">15</div>
<div class="abs" style="left:1px;top:496.7px;width:25px;height:1px;background:#C4C4C4"></div>
<div class="abs rowh" style="top:500.8px">16</div>
<div class="abs" style="left:1px;top:515.8px;width:25px;height:1px;background:#C4C4C4"></div>
<div class="abs rowh" style="top:519.8px">17</div>
<div class="abs" style="left:1px;top:534.8px;width:25px;height:1px;background:#C4C4C4"></div>
<div class="abs rowh" style="top:538.9px">18</div>
<div class="abs" style="left:1px;top:553.9px;width:25px;height:1px;background:#C4C4C4"></div>
<div class="abs rowh" style="top:557.4px">19</div>
<div class="abs" style="left:1px;top:572.4px;width:25px;height:1px;background:#C4C4C4"></div>
<div class="abs rowh" style="top:575.9px">20</div>
<div class="abs" style="left:1px;top:590.9px;width:25px;height:1px;background:#C4C4C4"></div>
<div class="abs rowh" style="top:594.2px">21</div>
<div class="abs" style="left:1px;top:609.2px;width:25px;height:1px;background:#C4C4C4"></div>
<div class="abs rowh" style="top:612.6px">22</div>
<div class="abs" style="left:749px;top:162px;width:1px;height:8px;background:#F0B27A"></div>
<div class="abs h" style="left:29.5px;top:214.9px">ID</div>
<div class="abs h" style="left:90.5px;top:214.9px">PV</div>
<div class="abs h" style="left:158.5px;top:214.9px">NPR</div>
<div class="abs h" style="left:217px;top:196.6px">Interest</div>
<div class="abs h" style="left:217px;top:214.9px">Rate</div>
<div class="abs h" style="left:276px;top:178.3px">Employ</div>
<div class="abs h" style="left:276px;top:196.6px">ment</div>
<div class="abs h" style="left:276px;top:214.9px">Length</div>
<div class="abs h" style="left:335px;top:196.6px">&nbsp;Annual</div>
<div class="abs h" style="left:335px;top:214.9px">Income</div>
<div class="abs h" style="left:412px;top:196.6px">Loan</div>
<div class="abs h" style="left:412px;top:214.9px">Status</div>
<div class="abs h" style="left:470.5px;top:214.9px">Address</div>
<div class="abs h" style="left:525px;top:196.6px">&nbsp;Total</div>
<div class="abs h" style="left:525px;top:214.9px">Payment</div>
<div class="abs h" style="left:601.5px;top:196.6px">Ownershi</div>
<div class="abs h" style="left:601.5px;top:214.9px">p Type</div>
<div class="abs big" style="left:29px;top:233.9px;width:56px;text-align:left">2365921</div>
<div class="abs d dl" style="left:90.3px;top:233.7px;width:10px;text-align:left">$</div>
<div class="abs d" style="left:85px;top:233.7px;width:65px;text-align:right">18,000.00</div>
<div class="abs d" style="left:155px;top:233.7px;width:57px;text-align:right">36</div>
<div class="abs d" style="left:214px;top:233.7px;width:57px;text-align:right">0.089</div>
<div class="abs d t" style="left:275.5px;top:233.7px;width:56px;text-align:left">7 years</div>
<div class="abs d dl" style="left:337.8px;top:233.7px;width:10px;text-align:left">$</div>
<div class="abs d" style="left:332px;top:233.7px;width:71.5px;text-align:right">70,000.00</div>
<div class="abs d t clip" style="left:411px;top:233.7px;width:56px;text-align:left">Source Verified</div>
<div class="abs d t" style="left:470.5px;top:233.7px;width:50px;text-align:left">TX</div>
<div class="abs d dl" style="left:527.8px;top:233.7px;width:10px;text-align:left">$</div>
<div class="abs d" style="left:521px;top:233.7px;width:72px;text-align:right">20,573.08</div>
<div class="abs d t" style="left:601px;top:233.7px;width:60px;text-align:left">Lease</div>
<div class="abs big" style="left:29px;top:253.1px;width:56px;text-align:left">2365924</div>
<div class="abs d dl" style="left:90.3px;top:252.9px;width:10px;text-align:left">$</div>
<div class="abs d" style="left:85px;top:252.9px;width:65px;text-align:right">2,500.00</div>
<div class="abs d" style="left:155px;top:252.9px;width:57px;text-align:right">60</div>
<div class="abs d" style="left:214px;top:252.9px;width:57px;text-align:right">0.079</div>
<div class="abs d t" style="left:275.5px;top:252.9px;width:56px;text-align:left">5 years</div>
<div class="abs d dl" style="left:337.8px;top:252.9px;width:10px;text-align:left">$</div>
<div class="abs d" style="left:332px;top:252.9px;width:71.5px;text-align:right">80,000.00</div>
<div class="abs d t clip" style="left:411px;top:252.9px;width:56px;text-align:left">Not Verified</div>
<div class="abs d t" style="left:470.5px;top:252.9px;width:50px;text-align:left">KS</div>
<div class="abs d dl" style="left:527.8px;top:252.9px;width:10px;text-align:left">$</div>
<div class="abs d" style="left:521px;top:252.9px;width:72px;text-align:right">3,034.29</div>
<div class="abs d t" style="left:601px;top:252.9px;width:60px;text-align:left">Lease</div>
<div class="abs big" style="left:29px;top:272.2px;width:56px;text-align:left">2365927</div>
<div class="abs d dl" style="left:90.3px;top:272.0px;width:10px;text-align:left">$</div>
<div class="abs d" style="left:85px;top:272.0px;width:65px;text-align:right">21,000.00</div>
<div class="abs d" style="left:155px;top:272.0px;width:57px;text-align:right">36</div>
<div class="abs d" style="left:214px;top:272.0px;width:57px;text-align:right">0.0751</div>
<div class="abs d t" style="left:275.5px;top:272.0px;width:56px;text-align:left">4 years</div>
<div class="abs d dl" style="left:337.8px;top:272.0px;width:10px;text-align:left">$</div>
<div class="abs d" style="left:332px;top:272.0px;width:71.5px;text-align:right">50,000.00</div>
<div class="abs d t clip" style="left:411px;top:272.0px;width:56px;text-align:left">Source Verified</div>
<div class="abs d t" style="left:470.5px;top:272.0px;width:50px;text-align:left">TX</div>
<div class="abs d dl" style="left:527.8px;top:272.0px;width:10px;text-align:left">$</div>
<div class="abs d" style="left:521px;top:272.0px;width:72px;text-align:right">23,519.77</div>
<div class="abs d t" style="left:601px;top:272.0px;width:60px;text-align:left">Own</div>
<div class="abs big" style="left:29px;top:291.4px;width:56px;text-align:left">2365930</div>
<div class="abs d dl" style="left:90.3px;top:291.2px;width:10px;text-align:left">$</div>
<div class="abs d" style="left:85px;top:291.2px;width:65px;text-align:right">35,000.00</div>
<div class="abs d" style="left:155px;top:291.2px;width:57px;text-align:right">36</div>
<div class="abs d" style="left:214px;top:291.2px;width:57px;text-align:right">0.1903</div>
<div class="abs d t" style="left:275.5px;top:291.2px;width:56px;text-align:left">2 years</div>
<div class="abs d dl" style="left:337.8px;top:291.2px;width:10px;text-align:left">$</div>
<div class="abs d" style="left:332px;top:291.2px;width:71.5px;text-align:right">35,000.00</div>
<div class="abs d t clip" style="left:411px;top:291.2px;width:56px;text-align:left">Source Verified</div>
<div class="abs d t" style="left:470.5px;top:291.2px;width:50px;text-align:left">CT</div>
<div class="abs d dl" style="left:527.8px;top:291.2px;width:10px;text-align:left">$</div>
<div class="abs d" style="left:521px;top:291.2px;width:72px;text-align:right">46,205.70</div>
<div class="abs d t" style="left:601px;top:291.2px;width:60px;text-align:left">Lease</div>
<div class="abs big" style="left:29px;top:310.5px;width:56px;text-align:left">2365933</div>
<div class="abs d dl" style="left:90.3px;top:310.3px;width:10px;text-align:left">$</div>
<div class="abs d" style="left:85px;top:310.3px;width:65px;text-align:right">10,000.00</div>
<div class="abs d" style="left:155px;top:310.3px;width:57px;text-align:right">36</div>
<div class="abs d" style="left:214px;top:310.3px;width:57px;text-align:right">0.079</div>
<div class="abs d t" style="left:275.5px;top:310.3px;width:56px;text-align:left">1 year</div>
<div class="abs d dl" style="left:337.8px;top:310.3px;width:10px;text-align:left">$</div>
<div class="abs d" style="left:332px;top:310.3px;width:71.5px;text-align:right">65,000.00</div>
<div class="abs d t clip" style="left:411px;top:310.3px;width:56px;text-align:left">Source Verified</div>
<div class="abs d t" style="left:470.5px;top:310.3px;width:50px;text-align:left">PA</div>
<div class="abs d dl" style="left:527.8px;top:310.3px;width:10px;text-align:left">$</div>
<div class="abs d" style="left:521px;top:310.3px;width:72px;text-align:right">11,264.49</div>
<div class="abs d t" style="left:601px;top:310.3px;width:60px;text-align:left">Own</div>
<div class="abs big" style="left:29px;top:329.7px;width:56px;text-align:left">2365936</div>
<div class="abs d dl" style="left:90.3px;top:329.5px;width:10px;text-align:left">$</div>
<div class="abs d" style="left:85px;top:329.5px;width:65px;text-align:right">7,000.00</div>
<div class="abs d" style="left:155px;top:329.5px;width:57px;text-align:right">36</div>
<div class="abs d" style="left:214px;top:329.5px;width:57px;text-align:right">0.1758</div>
<div class="abs d t" style="left:275.5px;top:329.5px;width:56px;text-align:left">5 years</div>
<div class="abs d dl" style="left:337.8px;top:329.5px;width:10px;text-align:left">$</div>
<div class="abs d" style="left:332px;top:329.5px;width:71.5px;text-align:right">84,000.00</div>
<div class="abs d t clip" style="left:411px;top:329.5px;width:56px;text-align:left">Not Verified</div>
<div class="abs d t" style="left:470.5px;top:329.5px;width:50px;text-align:left">UT</div>
<div class="abs d dl" style="left:527.8px;top:329.5px;width:10px;text-align:left">$</div>
<div class="abs d" style="left:521px;top:329.5px;width:72px;text-align:right">9,057.40</div>
<div class="abs d t" style="left:601px;top:329.5px;width:60px;text-align:left">Own</div>
<div class="abs big" style="left:29px;top:348.9px;width:56px;text-align:left">2365939</div>
<div class="abs d dl" style="left:90.3px;top:348.7px;width:10px;text-align:left">$</div>
<div class="abs d" style="left:85px;top:348.7px;width:65px;text-align:right">24,000.00</div>
<div class="abs d" style="left:155px;top:348.7px;width:57px;text-align:right">60</div>
<div class="abs d" style="left:214px;top:348.7px;width:57px;text-align:right">0.1242</div>
<div class="abs d t" style="left:275.5px;top:348.7px;width:56px;text-align:left">3 years</div>
<div class="abs d dl" style="left:337.8px;top:348.7px;width:10px;text-align:left">$</div>
<div class="abs d" style="left:332px;top:348.7px;width:71.5px;text-align:right">75,000.00</div>
<div class="abs d t clip" style="left:411px;top:348.7px;width:56px;text-align:left">Source Verified</div>
<div class="abs d t" style="left:470.5px;top:348.7px;width:50px;text-align:left">FL</div>
<div class="abs d dl" style="left:527.8px;top:348.7px;width:10px;text-align:left">$</div>
<div class="abs d" style="left:521px;top:348.7px;width:72px;text-align:right">32,338.47</div>
<div class="abs d t" style="left:601px;top:348.7px;width:60px;text-align:left">Own</div>
<div class="abs big" style="left:29px;top:368.0px;width:56px;text-align:left">2365942</div>
<div class="abs d dl" style="left:90.3px;top:367.8px;width:10px;text-align:left">$</div>
<div class="abs d" style="left:85px;top:367.8px;width:65px;text-align:right">10,625.00</div>
<div class="abs d" style="left:155px;top:367.8px;width:57px;text-align:right">36</div>
<div class="abs d" style="left:214px;top:367.8px;width:57px;text-align:right">0.1629</div>
<div class="abs d t" style="left:275.5px;top:367.8px;width:56px;text-align:left">20+ years</div>
<div class="abs d dl" style="left:337.8px;top:367.8px;width:10px;text-align:left">$</div>
<div class="abs d" style="left:332px;top:367.8px;width:71.5px;text-align:right">35,000.00</div>
<div class="abs d t clip" style="left:411px;top:367.8px;width:56px;text-align:left">Source Verified</div>
<div class="abs d t" style="left:470.5px;top:367.8px;width:50px;text-align:left">NJ</div>
<div class="abs d dl" style="left:527.8px;top:367.8px;width:10px;text-align:left">$</div>
<div class="abs d" style="left:521px;top:367.8px;width:72px;text-align:right">13,502.39</div>
<div class="abs d t" style="left:601px;top:367.8px;width:60px;text-align:left">Lease</div>
<div class="abs big" style="left:29px;top:387.2px;width:56px;text-align:left">2365945</div>
<div class="abs d dl" style="left:90.3px;top:387.0px;width:10px;text-align:left">$</div>
<div class="abs d" style="left:85px;top:387.0px;width:65px;text-align:right">5,000.00</div>
<div class="abs d" style="left:155px;top:387.0px;width:57px;text-align:right">36</div>
<div class="abs d" style="left:214px;top:387.0px;width:57px;text-align:right">0.0991</div>
<div class="abs d t" style="left:275.5px;top:387.0px;width:56px;text-align:left">2 years</div>
<div class="abs d dl" style="left:337.8px;top:387.0px;width:10px;text-align:left">$</div>
<div class="abs d" style="left:332px;top:387.0px;width:71.5px;text-align:right">40,000.00</div>
<div class="abs d t clip" style="left:411px;top:387.0px;width:56px;text-align:left">Verified</div>
<div class="abs d t" style="left:470.5px;top:387.0px;width:50px;text-align:left">TX</div>
<div class="abs d dl" style="left:527.8px;top:387.0px;width:10px;text-align:left">$</div>
<div class="abs d" style="left:521px;top:387.0px;width:72px;text-align:right">5,800.49</div>
<div class="abs d t" style="left:601px;top:387.0px;width:60px;text-align:left">Own</div>
<div class="abs big" style="left:29px;top:406.3px;width:56px;text-align:left">2365948</div>
<div class="abs d dl" style="left:90.3px;top:406.1px;width:10px;text-align:left">$</div>
<div class="abs d" style="left:85px;top:406.1px;width:65px;text-align:right">8,050.00</div>
<div class="abs d" style="left:155px;top:406.1px;width:57px;text-align:right">36</div>
<div class="abs d" style="left:214px;top:406.1px;width:57px;text-align:right">0.1171</div>
<div class="abs d t" style="left:275.5px;top:406.1px;width:56px;text-align:left">10+ years</div>
<div class="abs d dl" style="left:337.8px;top:406.1px;width:10px;text-align:left">$</div>
<div class="abs d" style="left:332px;top:406.1px;width:71.5px;text-align:right">100,000.00</div>
<div class="abs d t clip" style="left:411px;top:406.1px;width:56px;text-align:left">Not Verified</div>
<div class="abs d t" style="left:470.5px;top:406.1px;width:50px;text-align:left">CA</div>
<div class="abs d dl" style="left:527.8px;top:406.1px;width:10px;text-align:left">$</div>
<div class="abs d" style="left:521px;top:406.1px;width:72px;text-align:right">9,585.42</div>
<div class="abs d t" style="left:601px;top:406.1px;width:60px;text-align:left">Own</div>
<div class="abs big" style="left:29px;top:425.5px;width:56px;text-align:left">2365951</div>
<div class="abs d dl" style="left:90.3px;top:425.3px;width:10px;text-align:left">$</div>
<div class="abs d" style="left:85px;top:425.3px;width:65px;text-align:right">5,600.00</div>
<div class="abs d" style="left:155px;top:425.3px;width:57px;text-align:right">36</div>
<div class="abs d" style="left:214px;top:425.3px;width:57px;text-align:right">0.1349</div>
<div class="abs d t" style="left:275.5px;top:425.3px;width:56px;text-align:left">20+ years</div>
<div class="abs d dl" style="left:337.8px;top:425.3px;width:10px;text-align:left">$</div>
<div class="abs d" style="left:332px;top:425.3px;width:71.5px;text-align:right">40,000.00</div>
<div class="abs d t clip" style="left:411px;top:425.3px;width:56px;text-align:left">Source Verified</div>
<div class="abs d t" style="left:470.5px;top:425.3px;width:50px;text-align:left">CA</div>
<div class="abs d dl" style="left:527.8px;top:425.3px;width:10px;text-align:left">$</div>
<div class="abs d" style="left:521px;top:425.3px;width:72px;text-align:right">6,840.38</div>
<div class="abs d t" style="left:601px;top:425.3px;width:60px;text-align:left">Own</div>
<div class="abs big" style="left:29px;top:444.7px;width:56px;text-align:left">2365954</div>
<div class="abs d dl" style="left:90.3px;top:444.5px;width:10px;text-align:left">$</div>
<div class="abs d" style="left:85px;top:444.5px;width:65px;text-align:right">7,500.00</div>
<div class="abs d" style="left:155px;top:444.5px;width:57px;text-align:right">60</div>
<div class="abs d" style="left:214px;top:444.5px;width:57px;text-align:right">0.0991</div>
<div class="abs d t" style="left:275.5px;top:444.5px;width:56px;text-align:left">1 year</div>
<div class="abs d dl" style="left:337.8px;top:444.5px;width:10px;text-align:left">$</div>
<div class="abs d" style="left:332px;top:444.5px;width:71.5px;text-align:right">52,000.00</div>
<div class="abs d t clip" style="left:411px;top:444.5px;width:56px;text-align:left">Source Verified</div>
<div class="abs d t" style="left:470.5px;top:444.5px;width:50px;text-align:left">AZ</div>
<div class="abs d dl" style="left:527.8px;top:444.5px;width:10px;text-align:left">$</div>
<div class="abs d" style="left:521px;top:444.5px;width:72px;text-align:right">9,541.25</div>
<div class="abs d t" style="left:601px;top:444.5px;width:60px;text-align:left">Lease</div>
<div class="abs big" style="left:29px;top:463.8px;width:56px;text-align:left">2365957</div>
<div class="abs d dl" style="left:90.3px;top:463.6px;width:10px;text-align:left">$</div>
<div class="abs d" style="left:85px;top:463.6px;width:65px;text-align:right">7,000.00</div>
<div class="abs d" style="left:155px;top:463.6px;width:57px;text-align:right">36</div>
<div class="abs d" style="left:214px;top:463.6px;width:57px;text-align:right">0.1269</div>
<div class="abs d t" style="left:275.5px;top:463.6px;width:56px;text-align:left">10+ years</div>
<div class="abs d dl" style="left:337.8px;top:463.6px;width:10px;text-align:left">$</div>
<div class="abs d" style="left:332px;top:463.6px;width:71.5px;text-align:right">40,000.00</div>
<div class="abs d t clip" style="left:411px;top:463.6px;width:56px;text-align:left">Verified</div>
<div class="abs d t" style="left:470.5px;top:463.6px;width:50px;text-align:left">FL</div>
<div class="abs d dl" style="left:527.8px;top:463.6px;width:10px;text-align:left">$</div>
<div class="abs d" style="left:521px;top:463.6px;width:72px;text-align:right">8,453.30</div>
<div class="abs d t" style="left:601px;top:463.6px;width:60px;text-align:left">Lease</div>
<div class="abs big" style="left:29px;top:483.0px;width:56px;text-align:left">2365960</div>
<div class="abs d dl" style="left:90.3px;top:482.8px;width:10px;text-align:left">$</div>
<div class="abs d" style="left:85px;top:482.8px;width:65px;text-align:right">5,400.00</div>
<div class="abs d" style="left:155px;top:482.8px;width:57px;text-align:right">36</div>
<div class="abs d" style="left:214px;top:482.8px;width:57px;text-align:right">0.0991</div>
<div class="abs d t" style="left:275.5px;top:482.8px;width:56px;text-align:left">10+ years</div>
<div class="abs d dl" style="left:337.8px;top:482.8px;width:10px;text-align:left">$</div>
<div class="abs d" style="left:332px;top:482.8px;width:71.5px;text-align:right">85,000.00</div>
<div class="abs d t clip" style="left:411px;top:482.8px;width:56px;text-align:left">Not Verified</div>
<div class="abs d t" style="left:470.5px;top:482.8px;width:50px;text-align:left">AZ</div>
<div class="abs d dl" style="left:527.8px;top:482.8px;width:10px;text-align:left">$</div>
<div class="abs d" style="left:521px;top:482.8px;width:72px;text-align:right">6,264.53</div>
<div class="abs d t" style="left:601px;top:482.8px;width:60px;text-align:left">Lease</div>
<div class="abs big" style="left:29px;top:502.1px;width:56px;text-align:left">2365963</div>
<div class="abs d dl" style="left:90.3px;top:501.9px;width:10px;text-align:left">$</div>
<div class="abs d" style="left:85px;top:501.9px;width:65px;text-align:right">16,000.00</div>
<div class="abs d" style="left:155px;top:501.9px;width:57px;text-align:right">36</div>
<div class="abs d" style="left:214px;top:501.9px;width:57px;text-align:right">0.1825</div>
<div class="abs d t" style="left:275.5px;top:501.9px;width:56px;text-align:left">5 years</div>
<div class="abs d dl" style="left:337.8px;top:501.9px;width:10px;text-align:left">$</div>
<div class="abs d" style="left:332px;top:501.9px;width:71.5px;text-align:right">55,000.00</div>
<div class="abs d t clip" style="left:411px;top:501.9px;width:56px;text-align:left">Verified</div>
<div class="abs d t" style="left:470.5px;top:501.9px;width:50px;text-align:left">MA</div>
<div class="abs d dl" style="left:527.8px;top:501.9px;width:10px;text-align:left">$</div>
<div class="abs d" style="left:521px;top:501.9px;width:72px;text-align:right">20,896.09</div>
<div class="abs d t" style="left:601px;top:501.9px;width:60px;text-align:left">Own</div>
<div class="abs big" style="left:29px;top:521.3px;width:56px;text-align:left">2365966</div>
<div class="abs d dl" style="left:90.3px;top:521.1px;width:10px;text-align:left">$</div>
<div class="abs d" style="left:85px;top:521.1px;width:65px;text-align:right">35,000.00</div>
<div class="abs d" style="left:155px;top:521.1px;width:57px;text-align:right">36</div>
<div class="abs d" style="left:214px;top:521.1px;width:57px;text-align:right">0.1727</div>
<div class="abs d t" style="left:275.5px;top:521.1px;width:56px;text-align:left">3 years</div>
<div class="abs d dl" style="left:337.8px;top:521.1px;width:10px;text-align:left">$</div>
<div class="abs d" style="left:332px;top:521.1px;width:71.5px;text-align:right">110,000.00</div>
<div class="abs d t clip" style="left:411px;top:521.1px;width:56px;text-align:left">Not Verified</div>
<div class="abs d t" style="left:470.5px;top:521.1px;width:50px;text-align:left">NJ</div>
<div class="abs d dl" style="left:527.8px;top:521.1px;width:10px;text-align:left">$</div>
<div class="abs d" style="left:521px;top:521.1px;width:72px;text-align:right">45,091.93</div>
<div class="abs d t" style="left:601px;top:521.1px;width:60px;text-align:left">Lease</div>
<div class="abs big" style="left:29px;top:540.5px;width:56px;text-align:left">2365969</div>
<div class="abs d dl" style="left:90.3px;top:540.3px;width:10px;text-align:left">$</div>
<div class="abs d" style="left:85px;top:540.3px;width:65px;text-align:right">6,000.00</div>
<div class="abs d" style="left:155px;top:540.3px;width:57px;text-align:right">36</div>
<div class="abs d" style="left:214px;top:540.3px;width:57px;text-align:right">0.1825</div>
<div class="abs d t" style="left:275.5px;top:540.3px;width:56px;text-align:left">10+ years</div>
<div class="abs d dl" style="left:337.8px;top:540.3px;width:10px;text-align:left">$</div>
<div class="abs d" style="left:332px;top:540.3px;width:71.5px;text-align:right">100,000.00</div>
<div class="abs d t clip" style="left:411px;top:540.3px;width:56px;text-align:left">Not Verified</div>
<div class="abs d t" style="left:470.5px;top:540.3px;width:50px;text-align:left">CO</div>
<div class="abs d dl" style="left:527.8px;top:540.3px;width:10px;text-align:left">$</div>
<div class="abs d" style="left:521px;top:540.3px;width:72px;text-align:right">7,836.03</div>
<div class="abs d t" style="left:601px;top:540.3px;width:60px;text-align:left">Own</div>
<div class="abs" style="left:661.5px;top:324px;width:57px;height:17.5px;border:2px solid #217346"></div>
<div class="abs" style="left:718.5px;top:341.5px;width:6px;height:6px;background:#fff"></div>
<div class="abs" style="left:719.5px;top:342.5px;width:4.5px;height:4.5px;background:#217346"></div>

<!-- vertical scrollbar -->
<div class="abs" style="left:750px;top:157px;width:18px;height:462px;background:#E6E6E6"></div>
<div class="abs" style="left:750px;top:171px;width:3px;height:448px;background:#D6D6D6"></div>
<div class="abs" style="left:750px;top:176px;width:1px;height:443px;background:#C8C8C8"></div>
<div class="abs" style="left:763px;top:171px;width:2.5px;height:448px;background:#D6D6D6"></div>
<div class="abs" style="left:752.5px;top:158.5px;width:10px;height:11px;background:#fff;border:1px solid #D0D0D0"></div>
<svg class="abs" style="left:753.5px;top:161px" width="10" height="6" viewBox="0 0 10 6"><path d="M1.5 5L5 1.5 8.5 5z" fill="#666"/></svg>
<div class="abs" style="left:753px;top:570px;width:10px;height:38px;background:#D6D6D6"></div>
<div class="abs" style="left:753px;top:171px;width:10px;height:415px;background:#fff;border-bottom:1px solid #C8C8C8"></div>
<div class="abs" style="left:752.5px;top:608px;width:10px;height:10px;background:#fff;border:1px solid #D0D0D0"></div>
<svg class="abs" style="left:753.5px;top:611px" width="10" height="6" viewBox="0 0 10 6"><path d="M1.5 1.5L5 5 8.5 1.5z" fill="#666"/></svg>

<!-- sheet tabs bar -->
<div class="abs" style="left:1px;top:619px;width:767px;height:22px;background:#E6E6E6"></div>
<div class="abs" style="left:1px;top:619px;width:767px;height:1px;background:#C8C8C8"></div>
<svg class="abs" style="left:20px;top:626px" width="30" height="9" viewBox="0 0 30 9"><path d="M4.5 1.5L2 4.5l2.5 3" fill="none" stroke="#BBB"/><path d="M24.5 1.5L27 4.5l-2.5 3" fill="none" stroke="#BBB"/></svg>
<div class="abs" style="left:77.5px;top:619px;width:53px;height:20px;background:#fff"></div>
<div class="abs" style="left:77.5px;top:637px;width:53px;height:2px;background:#217346"></div>
<div class="ui" style="left:86px;top:623.5px;font-size:10.1px;font-weight:bold;color:#217346">Week 1</div>
<div class="ui" style="left:140px;top:623.5px;font-size:9.6px;color:#444">Week 2</div>
<div class="abs" style="left:182px;top:623px;width:1px;height:13px;background:#AAA"></div>
<svg class="abs" style="left:207px;top:623px" width="14" height="14" viewBox="0 0 14 14"><circle cx="7" cy="7" r="5.5" fill="none" stroke="#666"/><path d="M7 4v6M4 7h6" stroke="#666"/></svg>
<svg class="abs" style="left:459px;top:625px" width="3" height="11" viewBox="0 0 3 11"><circle cx="1.5" cy="1.5" r="0.6" fill="#AAA"/><circle cx="1.5" cy="5.5" r="0.6" fill="#AAA"/><circle cx="1.5" cy="9.5" r="0.6" fill="#AAA"/></svg>
<div class="abs" style="left:473px;top:624.5px;width:277px;height:11px;background:#DADADA"></div>
<div class="abs" style="left:473.5px;top:624.5px;width:10px;height:10px;background:#fff;border:1px solid #CFCFCF"></div>
<svg class="abs" style="left:475px;top:626px" width="8" height="8" viewBox="0 0 8 8"><path d="M5.5 1.5L2.5 4l3 2.5z" fill="#555"/></svg>
<div class="abs" style="left:485px;top:624.5px;width:205px;height:10px;background:#fff;border:1px solid #CFCFCF"></div>
<div class="abs" style="left:739.5px;top:624.5px;width:10px;height:10px;background:#fff;border:1px solid #CFCFCF"></div>
<svg class="abs" style="left:741px;top:626px" width="8" height="8" viewBox="0 0 8 8"><path d="M2.5 1.5L5.5 4l-3 2.5z" fill="#555"/></svg>

<!-- status bar -->
<div class="abs" style="left:1px;top:641px;width:767px;height:16px;background:#F3F2F1"></div>
<div class="ui" style="left:7px;top:642.5px;font-size:8.3px;color:#555">Ready</div>
<svg class="abs" style="left:45px;top:643px" width="12" height="12" viewBox="0 0 12 12"><rect x="0.5" y="1.5" width="10" height="9" fill="none" stroke="#555"/><path d="M0.5 4h10M3 1.5v9" stroke="#555" stroke-width="0.7"/><circle cx="8" cy="8" r="2.5" fill="#F3F2F1" stroke="#555"/><circle cx="8" cy="8" r="1" fill="#555"/></svg>
<div class="abs" style="left:529px;top:641px;width:31px;height:16px;background:#D2D0CE"></div>
<svg class="abs" style="left:538px;top:643px" width="12" height="12" viewBox="0 0 12 12"><rect x="0.5" y="0.5" width="11" height="11" fill="none" stroke="#444"/><path d="M0.5 4.2h11M0.5 7.8h11M4.2 0.5v11M7.8 0.5v11" stroke="#444"/></svg>
<svg class="abs" style="left:569px;top:643px" width="12" height="12" viewBox="0 0 12 12"><rect x="0.5" y="0.5" width="11" height="11" fill="none" stroke="#555"/><rect x="3" y="3" width="6" height="6" fill="none" stroke="#555"/></svg>
<svg class="abs" style="left:599px;top:643px" width="12" height="12" viewBox="0 0 12 12"><path d="M0.5 0.5h11v11h-11z" fill="none" stroke="#555"/><path d="M5.5 0.5v6h6" fill="none" stroke="#555"/></svg>
<div class="abs" style="left:624px;top:649px;width:6px;height:1px;background:#555"></div>
<div class="abs" style="left:634px;top:649px;width:77px;height:1px;background:#999"></div>
<div class="abs" style="left:674px;top:644px;width:3px;height:10px;background:#555"></div>
<svg class="abs" style="left:715px;top:645px" width="8" height="8" viewBox="0 0 8 8"><path d="M4 1v6M1 4h6" stroke="#555"/></svg>
<div class="ui" style="left:731px;top:643.5px;font-size:8.1px;color:#555">120%</div>
</body></html>
